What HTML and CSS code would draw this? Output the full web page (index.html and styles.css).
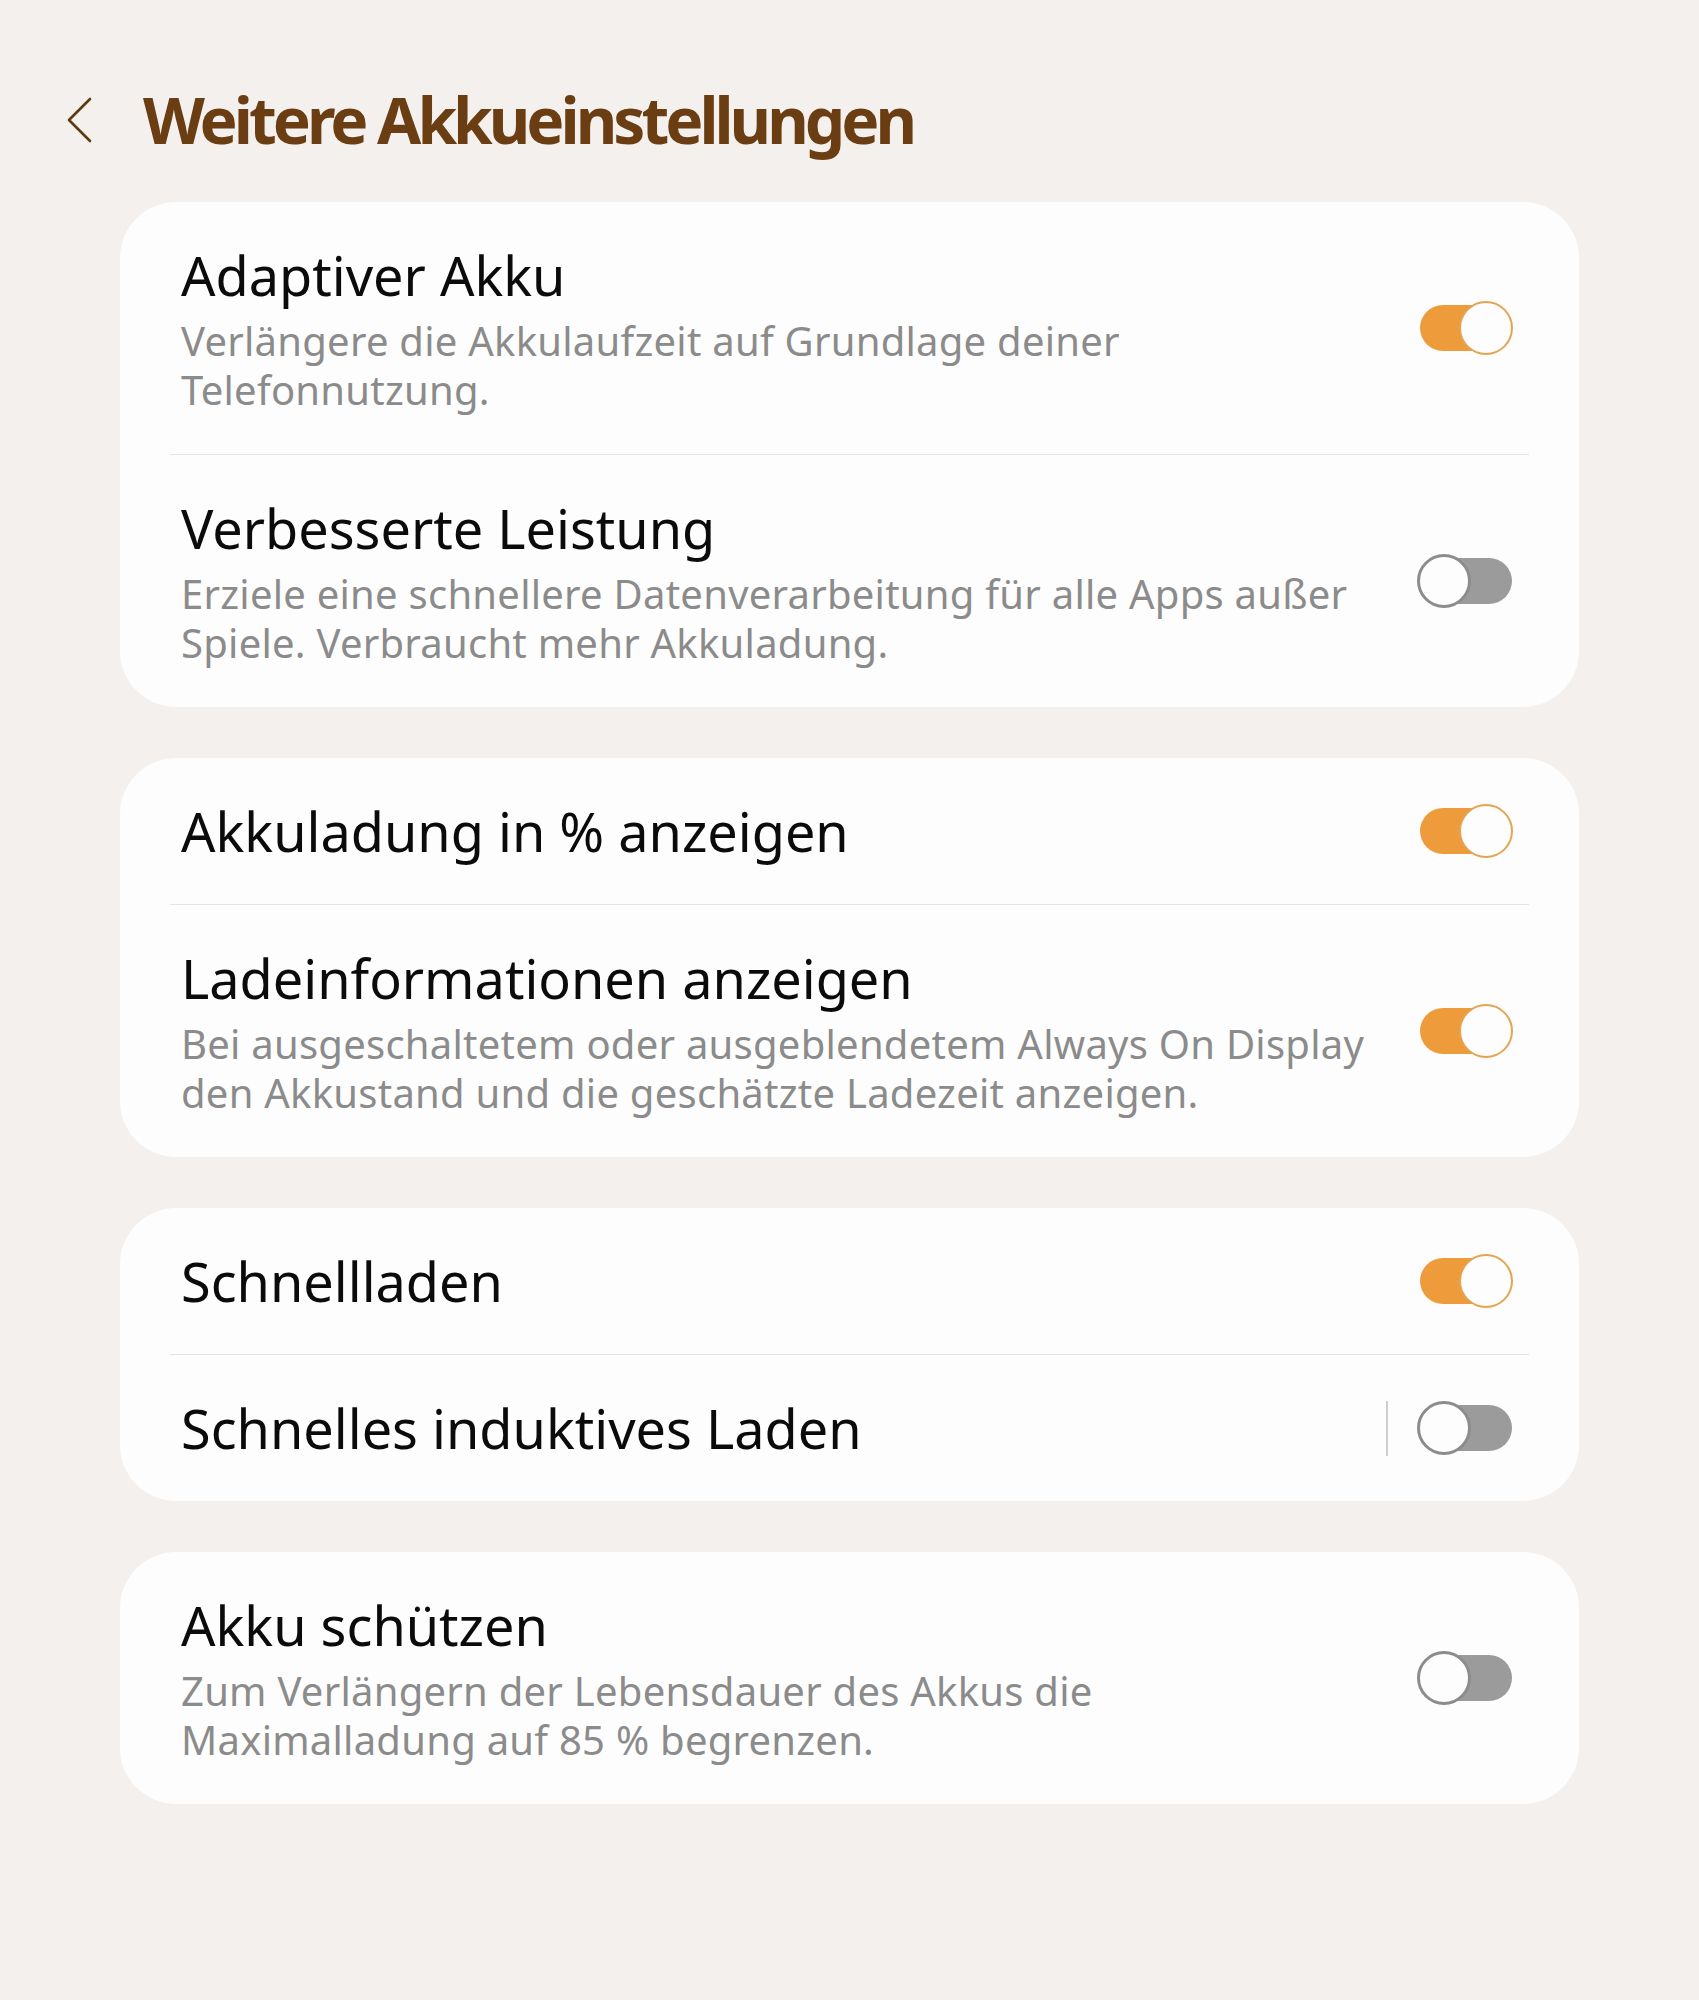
FILE: index.html
```html
<!DOCTYPE html>
<html lang="de">
<head>
  <meta charset="UTF-8">
  <meta name="viewport" content="width=device-width, initial-scale=1.0">
  <title>Weitere Akkueinstellungen</title>
  <link rel="stylesheet" href="styles.css">
</head>
<body>

  <!-- Header -->
  <div class="header">
    <a class="back" href="#">
      <svg width="26" height="46" viewBox="0 0 26 46">
        <path d="M24 2 L3 23 L24 44" fill="none" stroke="#5c3a14" stroke-width="2.6" stroke-linecap="round" stroke-linejoin="round"/>
      </svg>
    </a>
    <h1>Weitere Akkueinstellungen</h1>
  </div>

  <div class="list">

    <div class="card">
      <div class="row">
        <div class="text">
          <div class="title">Adaptiver Akku</div>
          <div class="sub">Verlängere die Akkulaufzeit auf Grundlage deiner Telefonnutzung.</div>
        </div>
        <div class="switch on"><span class="track"></span><span class="thumb"></span></div>
      </div>
      <div class="divider"></div>
      <div class="row">
        <div class="text">
          <div class="title">Verbesserte Leistung</div>
          <div class="sub">Erziele eine schnellere Datenverarbeitung für alle Apps außer Spiele. Verbraucht mehr Akkuladung.</div>
        </div>
        <div class="switch"><span class="track"></span><span class="thumb"></span></div>
      </div>
    </div>

    <div class="card">
      <div class="row">
        <div class="text">
          <div class="title">Akkuladung in % anzeigen</div>
        </div>
        <div class="switch on"><span class="track"></span><span class="thumb"></span></div>
      </div>
      <div class="divider"></div>
      <div class="row">
        <div class="text">
          <div class="title">Ladeinformationen anzeigen</div>
          <div class="sub">Bei ausgeschaltetem oder ausgeblendetem Always On Display den Akkustand und die geschätzte Ladezeit anzeigen.</div>
        </div>
        <div class="switch on"><span class="track"></span><span class="thumb"></span></div>
      </div>
    </div>

    <div class="card">
      <div class="row">
        <div class="text">
          <div class="title">Schnellladen</div>
        </div>
        <div class="switch on"><span class="track"></span><span class="thumb"></span></div>
      </div>
      <div class="divider"></div>
      <div class="row">
        <div class="text">
          <div class="title">Schnelles induktives Laden</div>
        </div>
        <div class="sep"></div>
        <div class="switch"><span class="track"></span><span class="thumb"></span></div>
      </div>
    </div>

    <div class="card">
      <div class="row">
        <div class="text">
          <div class="title">Akku schützen</div>
          <div class="sub">Zum Verlängern der Lebensdauer des Akkus die Maximalladung auf 85 % begrenzen.</div>
        </div>
        <div class="switch"><span class="track"></span><span class="thumb"></span></div>
      </div>
    </div>

  </div>

</body>
</html>
```

FILE: styles.css
```css
body {
  font-family: 'Noto Sans', 'Open Sans', sans-serif;
  background-color: #f4f0ed;
  margin: 0;
  padding: 0;
  min-height: 2000px;
}


.header {
  display: flex;
  align-items: center;
  padding: 80px 0 0 66px;
  height: 80px;
  margin-bottom: 42px;
}


.back {
  display: flex;
  width: 26px;
  height: 46px;
  margin-right: 51px;
}


h1 {
  margin: 0;
  font-size: 64px;
  line-height: 80px;
  font-weight: 700;
  color: #6a3e12;
  letter-spacing: -4px;
}


.list {
  padding: 0 120px;
  display: flex;
  flex-direction: column;
  gap: 51px;
}


.card {
  background-color: #fdfdfd;
  border-radius: 56px;
}


.row {
  display: flex;
  align-items: center;
  padding: 40px 66px 40px 61px;
}


.text {
  flex: 1;
  padding-right: 40px;
}


.title {
  font-size: 54px;
  line-height: 66px;
  color: #0b0b0b;
}


.sub {
  margin-top: 8px;
  font-size: 40px;
  line-height: 49px;
  letter-spacing: 0.25px;
  color: #8b8b8b;
}


.divider {
  height: 1px;
  margin: 0 50px;
  background-color: #e6e4e2;
}


.sep {
  width: 2px;
  height: 55px;
  margin-right: 29px;
  background-color: #cfcfcf;
}


/* toggle switch */
.switch {
  position: relative;
  width: 96px;
  height: 54px;
  flex-shrink: 0;
}


.switch .track {
  position: absolute;
  left: 3px;
  right: 1px;
  top: 4px;
  bottom: 4px;
  border-radius: 23px;
  background-color: #9b9b9b;
}


.switch .thumb {
  position: absolute;
  left: 0;
  top: 0;
  width: 48px;
  height: 48px;
  border-radius: 50%;
  background-color: #fdfdfd;
  border: 3px solid #8c8c8c;
}


.switch.on .track {
  background-color: #ee9b3c;
}


.switch.on .thumb {
  left: auto;
  right: 0;
  border: 2px solid #e3a552;
  width: 50px;
  height: 50px;
}
```
